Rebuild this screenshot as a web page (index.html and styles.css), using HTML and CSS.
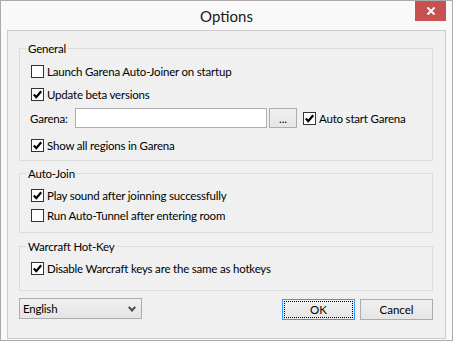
FILE: index.html
```html
<!DOCTYPE html>
<html lang="en">
<head>
    <meta charset="UTF-8">
    <title>Options</title>
    <link rel="stylesheet" href="styles.css">
</head>
<body>
    <div class="window">
        <div class="titlebar">
            <span class="title">Options</span>
            <button class="close-btn">
                <svg width="10" height="8" viewBox="0 0 10 8"><path d="M1.5 0.5 L8.5 7.5 M8.5 0.5 L1.5 7.5" stroke="#fff" stroke-width="2"/></svg>
            </button>
        </div>
        <div class="client">
            <fieldset class="group group-general">
                <legend>General</legend>
                <label class="row row-1"><span class="check"></span>Launch Garena Auto-Joiner on startup</label>
                <label class="row row-2"><span class="check checked"><svg width="11" height="11" viewBox="0 0 11 11"><path d="M1.8 5.6 L4.3 8.2 L9.2 2.2" fill="none" stroke="#000" stroke-width="2.2"/></svg></span>Update beta versions</label>
                <div class="row garena-row">
                    <span class="field-label">Garena:</span>
                    <input class="text-input" type="text">
                    <button class="browse-btn">...</button>
                    <label class="inline-check"><span class="check checked"><svg width="11" height="11" viewBox="0 0 11 11"><path d="M1.8 5.6 L4.3 8.2 L9.2 2.2" fill="none" stroke="#000" stroke-width="2.2"/></svg></span>Auto start Garena</label>
                </div>
                <label class="row row-4"><span class="check checked"><svg width="11" height="11" viewBox="0 0 11 11"><path d="M1.8 5.6 L4.3 8.2 L9.2 2.2" fill="none" stroke="#000" stroke-width="2.2"/></svg></span>Show all regions in Garena</label>
            </fieldset>
            <fieldset class="group group-autojoin">
                <legend>Auto-Join</legend>
                <label class="row row-1"><span class="check checked"><svg width="11" height="11" viewBox="0 0 11 11"><path d="M1.8 5.6 L4.3 8.2 L9.2 2.2" fill="none" stroke="#000" stroke-width="2.2"/></svg></span>Play sound after joinning successfully</label>
                <label class="row row-2"><span class="check"></span>Run Auto-Tunnel after entering room</label>
            </fieldset>
            <fieldset class="group group-hotkey">
                <legend>Warcraft Hot-Key</legend>
                <label class="row row-1"><span class="check checked"><svg width="11" height="11" viewBox="0 0 11 11"><path d="M1.8 5.6 L4.3 8.2 L9.2 2.2" fill="none" stroke="#000" stroke-width="2.2"/></svg></span>Disable Warcraft keys are the same as hotkeys</label>
            </fieldset>
            <div class="footer">
                <div class="combo">
                    <span>English</span>
                    <svg width="8" height="6" viewBox="0 0 8 6"><path d="M0.8 0.8 L4 4.5 L7.2 0.8" fill="none" stroke="#4a4a4a" stroke-width="2"/></svg>
                </div>
                <div class="buttons">
                    <button class="btn btn-default"><span>OK</span></button>
                    <button class="btn">Cancel</button>
                </div>
            </div>
        </div>
    </div>
</body>
</html>
```

FILE: styles.css
```css
* {
    box-sizing: border-box;
}

body {
    margin: 0;
    font-family: Lato, "Noto Sans", sans-serif;
    font-size: 11.5px;
    letter-spacing: -0.2px;
    color: #000;
    background: #fff;
}

.window {
    width: 453px;
    height: 341px;
    border: 1px solid #ababab;
    background: #f9f9f9;
    position: relative;
}

.titlebar {
    height: 29px;
    display: flex;
    align-items: center;
    justify-content: center;
}

.title {
    font-size: 15px;
    letter-spacing: 0;
    color: #1a1a1a;
}

.close-btn {
    position: absolute;
    top: 0;
    right: 6px;
    width: 31px;
    height: 20px;
    padding: 0;
    border: none;
    background: #c75050;
    display: flex;
    align-items: center;
    justify-content: center;
}

.client {
    margin-left: 6px;
    width: 439px;
    height: 309px;
    border: 1px solid #cccccc;
    background: #f0f0f0;
    padding: 10px 12px 0 11px;
}

/* group boxes */
.group {
    margin: 0;
    padding: 0;
    border: 1px solid #dcdcdc;
    min-width: 0;
}

.group legend {
    margin-left: 6px;
    padding: 0 2px;
    line-height: 15px;
}

.group-general {
    padding-bottom: 5px;
}

.group-autojoin {
    margin-top: 5px;
    padding-bottom: 7px;
}

.group-hotkey {
    margin-top: 6px;
    padding-bottom: 12px;
}

.row {
    display: flex;
    align-items: center;
    height: 20px;
    padding-left: 11px;
    gap: 3px;
}

.group-general .row-1 { margin-top: 5px; }
.group-general .row-2 { margin-top: 3px; }
.group-general .garena-row { margin-top: 4px; gap: 0; }
.group-general .row-4 { margin-top: 7px; }

.group-autojoin .row-1 { margin-top: 4px; }
.group-autojoin .row-2 { margin-top: 0; }

.group-hotkey .row-1 { margin-top: 4px; }

.check {
    width: 13px;
    height: 13px;
    flex: none;
    border: 1px solid #333;
    background: #fff;
    display: flex;
    align-items: center;
    justify-content: center;
}

.field-label {
    width: 45px;
    margin-left: -1px;
}

.text-input {
    width: 192px;
    height: 20px;
    margin: 0;
    border: 1px solid #abadb3;
    background: #fff;
    outline: none;
}

.browse-btn {
    width: 28px;
    height: 20px;
    margin-left: 2px;
    padding: 0 0 2px;
    border: 1px solid #acacac;
    background: linear-gradient(#f0f0f0, #e5e5e5);
    font: inherit;
    line-height: 12px;
    display: flex;
    align-items: flex-end;
    justify-content: center;
}

.inline-check {
    display: flex;
    align-items: center;
    gap: 3px;
    margin-left: 6px;
}

/* bottom row */
.footer {
    margin-top: 7px;
    display: flex;
    justify-content: space-between;
    align-items: flex-start;
}

.combo {
    width: 123px;
    height: 21px;
    border: 1px solid #acacac;
    background: linear-gradient(#f0f0f0, #e5e5e5);
    display: flex;
    align-items: center;
    justify-content: space-between;
    padding: 0 5px 0 3px;
}

.buttons {
    display: flex;
    gap: 5px;
    margin-top: 1px;
}

.btn {
    width: 73px;
    height: 21px;
    padding: 0;
    border: 1px solid #acacac;
    background: linear-gradient(#f0f0f0, #e5e5e5);
    font: inherit;
    color: #000;
}

.btn-default {
    border-color: #3399ff;
    padding: 1px;
}

.btn-default span {
    display: flex;
    align-items: center;
    justify-content: center;
    height: 100%;
    border: 1px dotted #000;
}
```
